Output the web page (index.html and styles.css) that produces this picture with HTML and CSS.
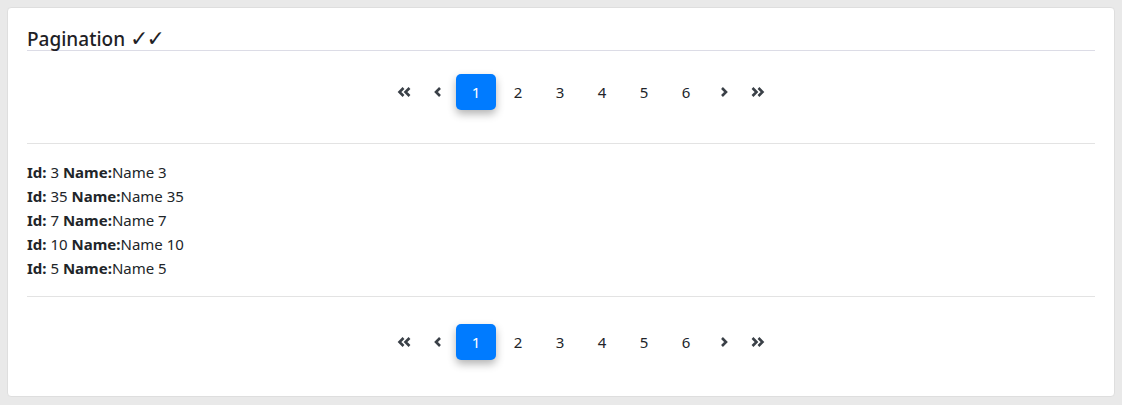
FILE: index.html
```html
<!DOCTYPE html>
<html>
<head>
<meta charset="utf-8">
<link rel="stylesheet" href="styles.css">
</head>
<body>
<div class="card">
  <h4 class="title">Pagination <span class="checks">✓✓</span></h4>
  <nav class="pager pager-top">
    <ul class="pagination">
      <li class="page-item nav"><a class="page-link"><svg width="14" height="10" viewBox="0 0 14 10"><polyline points="6.5,1 2.5,5 6.5,9" /><polyline points="12.5,1 8.5,5 12.5,9" /></svg></a></li>
      <li class="page-item nav"><a class="page-link"><svg width="8" height="10" viewBox="0 0 8 10"><polyline points="6,1 2,5 6,9" /></svg></a></li>
      <li class="page-item num active"><a class="page-link">1</a></li>
      <li class="page-item num"><a class="page-link">2</a></li>
      <li class="page-item num"><a class="page-link">3</a></li>
      <li class="page-item num"><a class="page-link">4</a></li>
      <li class="page-item num"><a class="page-link">5</a></li>
      <li class="page-item num"><a class="page-link">6</a></li>
      <li class="page-item nav"><a class="page-link"><svg width="8" height="10" viewBox="0 0 8 10"><polyline points="2,1 6,5 2,9" /></svg></a></li>
      <li class="page-item nav"><a class="page-link"><svg width="14" height="10" viewBox="0 0 14 10"><polyline points="1.5,1 5.5,5 1.5,9" /><polyline points="7.5,1 11.5,5 7.5,9" /></svg></a></li>
    </ul>
  </nav>
  <hr class="sep sep-top">
  <div class="items">
    <div class="item"><b>Id:</b> 3 <b>Name:</b>Name 3</div>
    <div class="item"><b>Id:</b> 35 <b>Name:</b>Name 35</div>
    <div class="item"><b>Id:</b> 7 <b>Name:</b>Name 7</div>
    <div class="item"><b>Id:</b> 10 <b>Name:</b>Name 10</div>
    <div class="item"><b>Id:</b> 5 <b>Name:</b>Name 5</div>
  </div>
  <hr class="sep sep-bottom">
  <nav class="pager pager-bottom">
    <ul class="pagination">
      <li class="page-item nav"><a class="page-link"><svg width="14" height="10" viewBox="0 0 14 10"><polyline points="6.5,1 2.5,5 6.5,9" /><polyline points="12.5,1 8.5,5 12.5,9" /></svg></a></li>
      <li class="page-item nav"><a class="page-link"><svg width="8" height="10" viewBox="0 0 8 10"><polyline points="6,1 2,5 6,9" /></svg></a></li>
      <li class="page-item num active"><a class="page-link">1</a></li>
      <li class="page-item num"><a class="page-link">2</a></li>
      <li class="page-item num"><a class="page-link">3</a></li>
      <li class="page-item num"><a class="page-link">4</a></li>
      <li class="page-item num"><a class="page-link">5</a></li>
      <li class="page-item num"><a class="page-link">6</a></li>
      <li class="page-item nav"><a class="page-link"><svg width="8" height="10" viewBox="0 0 8 10"><polyline points="2,1 6,5 2,9" /></svg></a></li>
      <li class="page-item nav"><a class="page-link"><svg width="14" height="10" viewBox="0 0 14 10"><polyline points="1.5,1 5.5,5 1.5,9" /><polyline points="7.5,1 11.5,5 7.5,9" /></svg></a></li>
    </ul>
  </nav>
</div>
</body>
</html>
```
FILE: styles.css
```css
html, body {
  margin: 0;
  padding: 0;
}
body {
  background: #e9e9e9;
  font-family: "Noto Sans", "Open Sans", sans-serif;
  color: #212529;
  padding: 7px 7px 8px 7px;
}
.card {
  background: #fff;
  border: 1px solid #dedede;
  border-radius: 4px;
  padding: 18px 19px 36px 19px;
  display: flex;
  flex-direction: column;
}
.title {
  margin: 0;
  padding-top: 2px;
  height: 22px;
  font-size: 19px;
  font-weight: 500;
  line-height: 22px;
  border-bottom: 1px solid #dcdce6;
  color: #1e2125;
}
.checks {
  font-family: "DejaVu Sans", sans-serif;
  font-size: 22px;
  font-weight: 400;
  line-height: 0;
  letter-spacing: -2px;
}
.pager {
  display: flex;
}
.pager-top { margin-top: 23px; }
.pager-bottom { margin-top: 27px; }
.pagination {
  list-style: none;
  margin: 0 auto;
  padding: 0;
  display: flex;
  gap: 2px;
  transform: translateX(20px);
}
.page-item { display: flex; }
.page-link {
  height: 36px;
  display: flex;
  align-items: center;
  justify-content: center;
  border-radius: 5px;
  font-size: 15px;
  color: #212529;
}
.num .page-link { width: 40px; }
.nav .page-link { width: 32px; }
.active .page-link {
  background: #007bff;
  color: #fff;
  box-shadow: 0 4px 8px rgba(0, 0, 0, 0.3);
}
.page-link svg polyline {
  fill: none;
  stroke: #3a4047;
  stroke-width: 2.6;
  stroke-linecap: butt;
  stroke-linejoin: miter;
}
.sep {
  border: 0;
  border-top: 1px solid #e3e3e3;
  margin: 0;
}
.sep-top { margin-top: 33px; }
.sep-bottom { margin-top: 16px; }
.items {
  margin-top: 16px;
  font-size: 15px;
  line-height: 24px;
}
.item b { font-weight: 700; }
```
